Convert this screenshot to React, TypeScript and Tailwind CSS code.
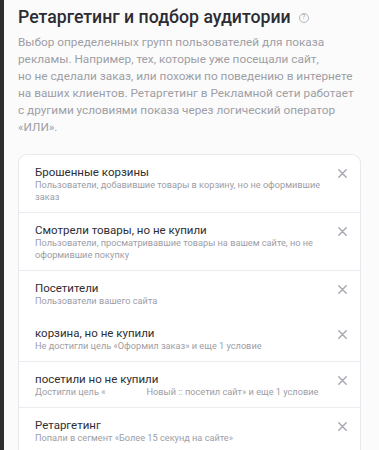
const ITEMS = [
  {
    title: 'Брошенные корзины',
    desc: ['Пользователи, добавившие товары в корзину, но не оформившие', 'заказ'],
    divider: true,
  },
  {
    title: 'Смотрели товары, но не купили',
    desc: ['Пользователи, просматривавшие товары на вашем сайте, но не', 'оформившие покупку'],
    divider: true,
  },
  { title: 'Посетители', desc: ['Пользователи вашего сайта'], divider: false },
  {
    title: 'корзина, но не купили',
    desc: ['Не достигли цель «Оформил заказ» и еще 1 условие'],
    divider: true,
  },
  {
    title: 'посетили но не купили',
    desc: ['Достигли цель «                  Новый :: посетил сайт» и еще 1 условие'],
    divider: true,
  },
  {
    title: 'Ретаргетинг',
    desc: ['Попали в сегмент «Более 15 секунд на сайте»'],
    divider: false,
  },
];

function CloseIcon() {
  return (
    <svg width="9" height="9" viewBox="0 0 9 9" className="mt-[3px] shrink-0">
      <path d="M0.8 0.8L8.2 8.2M8.2 0.8L0.8 8.2" stroke="#a9a9b3" strokeWidth="1.5" strokeLinecap="round" />
    </svg>
  );
}

export default function App() {
  return (
    <div className="flex h-[450px] w-[379px] overflow-hidden bg-[#fbfbfb] font-['Roboto',sans-serif]">
      <div className="w-[4px] shrink-0 bg-[#2e2e2e]" />
      <div className="flex flex-1 flex-col pl-[14px] pr-[18px] pt-[5px]">
        <div className="flex items-center gap-[8px]">
          <h2 className="whitespace-nowrap text-[17.7px] leading-[24px] font-medium text-[#2c2c33]">
            Ретаргетинг и подбор аудитории
          </h2>
          <span className="mt-[1px] flex h-[10px] w-[10px] items-center justify-center rounded-full border border-[#b5b5bc] text-[7px] leading-none text-[#a5a5ac]">
            ?
          </span>
        </div>
        <p className="mt-[5px] whitespace-nowrap text-[11.8px] leading-[17px] text-[#9e9ea6]">
          Выбор определенных групп пользователей для показа
          <br />
          рекламы. Например, тех, которые уже посещали сайт,
          <br />
          но не сделали заказ, или похожи по поведению в интернете
          <br />
          на ваших клиентов. Ретаргетинг в Рекламной сети работает
          <br />
          с другими условиями показа через логический оператор
          <br />
          «ИЛИ».
        </p>
        <div className="mt-[18px] rounded-t-[9px] border border-b-0 border-[#e8e8ee] bg-white">
          {ITEMS.map((item, i) => (
            <div
              key={i}
              className={`flex items-start justify-between pl-[16px] pr-[13px] pt-[11px] pb-[9px] ${
                item.divider ? 'border-b border-[#ebebf0]' : ''
              }`}
            >
              <div>
                <div className="text-[11.5px] leading-[13px] text-[#2e2e33]">{item.title}</div>
                {item.desc.map((line, j) => (
                  <div key={j} className="whitespace-pre text-[9.2px] leading-[12px] text-[#9d9da6]">
                    {line}
                  </div>
                ))}
              </div>
              <CloseIcon />
            </div>
          ))}
        </div>
      </div>
    </div>
  );
}
